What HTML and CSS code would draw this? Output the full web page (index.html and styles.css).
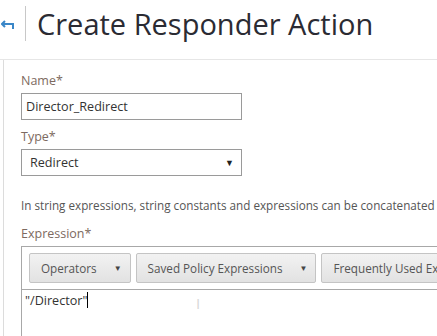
FILE: index.html
```html
<!DOCTYPE html>
<html lang="en">
<head>
  <meta charset="UTF-8">
  <title>Create Responder Action</title>
  <link rel="stylesheet" href="styles.css">
</head>
<body>
  <header class="top">
    <a href="#" class="back">
      <svg width="14" height="10" viewBox="0 0 14 10"><path d="M4 1 L1 4 L4 7" fill="none" stroke="#3a87c8" stroke-width="2"/><path d="M1 4 H12 V9" fill="none" stroke="#3a87c8" stroke-width="2"/></svg>
    </a>
    <div class="divider"></div>
    <h1>Create Responder Action</h1>
  </header>

  <div class="panel">
    <label class="lbl">Name*</label>
    <input type="text" class="field" value="Director_Redirect">

    <label class="lbl">Type*</label>
    <div class="field select">
      <span>Redirect</span>
      <span class="caret">&#9660;</span>
    </div>

    <p class="hint">In string expressions, string constants and expressions can be concatenated with the + operator.</p>

    <label class="lbl">Expression*</label>
    <div class="expr">
      <div class="toolbar">
        <button class="tb-btn">Operators <span class="dd">&#9660;</span></button>
        <button class="tb-btn">Saved Policy Expressions <span class="dd">&#9660;</span></button>
        <button class="tb-btn">Frequently Used Expressions <span class="dd">&#9660;</span></button>
      </div>
      <div class="expr-text">"/Director"<span class="cursor"></span><span class="ibeam">I</span></div>
    </div>
  </div>
</body>
</html>
```

FILE: styles.css
```css
* { box-sizing: border-box; }
body {
  margin: 0;
  font-family: 'Open Sans', sans-serif;
  background: #fff;
  color: #333;
  width: 437px;
  height: 336px;
  overflow: hidden;
}

.top {
  display: flex;
  align-items: center;
  height: 60px;
  border-bottom: 1px solid #e6e6e6;
  padding-bottom: 13px;
}

.back {
  display: flex;
  width: 25px;
  padding-left: 1px;
  padding-top: 3px;
}

.divider {
  width: 1px;
  height: 35px;
  background: #c8c8c8;
  margin-right: 11px;
}

h1 {
  margin: 0;
  font-weight: 400;
  font-size: 29px;
  color: #2b2b33;
  white-space: nowrap;
}

.panel {
  margin-left: 3px;
  border-left: 1px solid #dcdcdc;
  padding: 12px 0 0 17px;
  white-space: nowrap;
}

.lbl {
  display: block;
  font-size: 12.5px;
  color: #7d6a60;
  line-height: 18px;
  margin-bottom: 3px;
}

.field {
  display: block;
  width: 221px;
  height: 27px;
  border: 1px solid #9a9a9a;
  font-family: inherit;
  font-size: 12.6px;
  color: #333;
  padding: 0 4px;
  margin-bottom: 8px;
  outline: none;
}

.select {
  display: flex;
  align-items: center;
  justify-content: space-between;
  padding: 0 7px 0 8px;
  margin-bottom: 0;
}

.caret {
  font-size: 9px;
  color: #222;
}

.hint {
  margin: 20px 0 11px;
  font-size: 11.7px;
  color: #555;
  line-height: 18px;
}

.expr {
  border: 1px solid #a8a8a8;
  border-right: none;
  width: 420px;
  height: 100px;
}

.toolbar {
  display: flex;
  gap: 5px;
  padding: 6px 7px 6px;
  border-bottom: 1px solid #a8a8a8;
}

.tb-btn {
  flex: none;
  height: 30px;
  padding: 0 8px 0 11px;
  font-family: inherit;
  font-size: 11.7px;
  color: #555;
  background: linear-gradient(#f2f2f2, #e2e2e2);
  border: 1px solid #c4c4c4;
  border-radius: 2px;
  white-space: nowrap;
}

.dd {
  font-size: 8px;
  color: #444;
  margin-left: 14px;
  vertical-align: 2px;
}

.expr-text {
  position: relative;
  font-size: 12.6px;
  color: #333;
  padding: 2px 3px;
  line-height: 18px;
}

.cursor {
  display: inline-block;
  width: 1px;
  height: 16px;
  background: #000;
  vertical-align: -3px;
}

.ibeam {
  position: absolute;
  left: 174px;
  top: 4px;
  font-size: 15px;
  color: #d8d8d8;
}
```
